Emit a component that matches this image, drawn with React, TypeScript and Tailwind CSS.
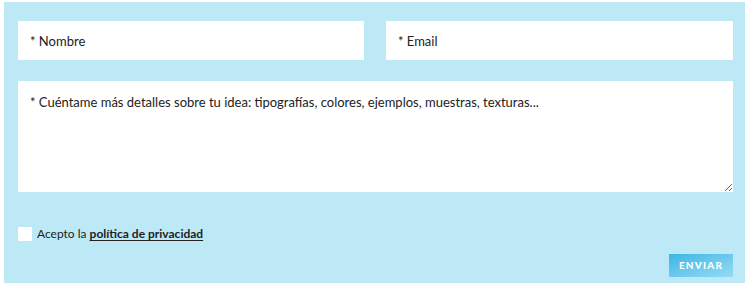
import React from "react";

export default function App() {
  return (
    <div className="min-h-screen bg-white pl-[4px] pt-[2px] font-['Lato','Noto_Sans',sans-serif]">
      <form
        className="w-[741px] h-[281px] bg-[#bde9f7] pl-[14px] pr-[12px] pt-[19px] flex flex-col"
        onSubmit={(e) => e.preventDefault()}
      >
        {/* Nombre / Email */}
        <div className="flex gap-[22px]">
          <input
            type="text"
            placeholder="* Nombre"
            className="w-[346px] h-[39px] bg-white px-[12px] text-[13px] text-[#222] placeholder:text-[#222] outline-none border-0"
          />
          <input
            type="email"
            placeholder="* Email"
            className="flex-1 h-[39px] bg-white px-[12px] text-[13px] text-[#222] placeholder:text-[#222] outline-none border-0"
          />
        </div>

        <textarea
          placeholder="* Cuéntame más detalles sobre tu idea: tipografías, colores, ejemplos, muestras, texturas..."
          className="mt-[21px] h-[111px] w-full bg-white px-[12px] pt-[12px] text-[13px] text-[#222] placeholder:text-[#222] outline-none border-0 resize-y block"
        />

        <label className="mt-[33px] h-[18px] flex items-center gap-[5px] text-[12px] leading-[18px] text-[#222]">
          <span className="w-[14px] h-[14px] bg-white inline-block" />
          <span>
            Acepto la{" "}
            <a href="#" className="font-bold underline underline-offset-2">
              política de privacidad
            </a>
          </span>
        </label>

        <div className="mt-[11px] flex justify-end">
          <button
            type="submit"
            className="w-[64px] h-[23px] bg-gradient-to-br from-[#38b6e6] to-[#93dbf4] text-white text-[10px] font-black tracking-[1.2px]"
          >
            ENVIAR
          </button>
        </div>
      </form>
    </div>
  );
}
